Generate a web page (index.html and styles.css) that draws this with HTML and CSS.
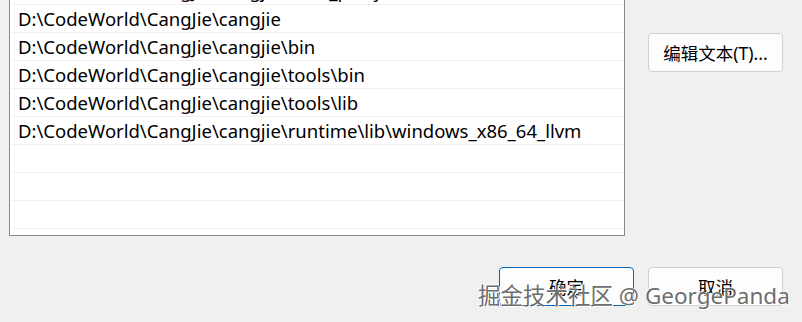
FILE: index.html
```html
<!DOCTYPE html>
<html lang="zh-CN">
<head>
  <meta charset="UTF-8" />
  <title>编辑环境变量</title>
  <link rel="stylesheet" href="styles.css">
</head>
<body>

  <div class="dialogo">
    <div class="arriba">
      <div class="lista">
        <div class="fila">D:\CodeWorld\CangJie\cangjie\third_party\llvm\lldb\bin</div>
        <div class="fila">D:\CodeWorld\CangJie\cangjie</div>
        <div class="fila">D:\CodeWorld\CangJie\cangjie\bin</div>
        <div class="fila">D:\CodeWorld\CangJie\cangjie\tools\bin</div>
        <div class="fila">D:\CodeWorld\CangJie\cangjie\tools\lib</div>
        <div class="fila">D:\CodeWorld\CangJie\cangjie\runtime\lib\windows_x86_64_llvm</div>
        <div class="fila"></div>
        <div class="fila"></div>
        <div class="fila"></div>
        <div class="fila"></div>
      </div>
      <div class="lateral">
        <button class="btn">编辑文本(T)...</button>
      </div>
    </div>

    <div class="acciones">
      <button class="btn btn-foco">确定</button>
      <button class="btn">取消</button>
    </div>
  </div>

  <div class="marca">掘金技术社区 @ GeorgePanda</div>

</body>
</html>
```

FILE: styles.css
```css
body {
  background: #f0f0f0;
  font-family: "Noto Sans", "Noto Sans CJK SC", sans-serif;
  margin: 0;
  color: #000;
  overflow: hidden;
}
.dialogo {
  padding: 0 19px 0 9px;
}
.arriba {
  display: flex;
  align-items: flex-start;
}
.lista {
  width: 616px;
  height: 260px;
  margin-top: -24px;
  box-sizing: border-box;
  border: 1px solid #8a8a8a;
  background: #fff;
  overflow: hidden;
}
.fila {
  height: 27px;
  line-height: 27px;
  margin-left: 2px;
  padding-left: 6px;
  border-bottom: 1px solid #eeeeee;
  font-size: 18.5px;
  white-space: nowrap;
}
.lateral {
  margin-left: 23px;
  margin-top: 33px;
}
.btn {
  width: 135px;
  height: 39px;
  padding: 0;
  border: 1px solid #d0d0d0;
  border-radius: 4px;
  background: #fdfdfd;
  font-family: "Noto Sans", "Noto Sans CJK SC", sans-serif;
  font-size: 17.5px;
  color: #000;
}
.btn-foco {
  border-color: #0067c0;
}
.acciones {
  display: flex;
  justify-content: flex-end;
  gap: 14px;
  margin-top: 31px;
}
.marca {
  position: absolute;
  left: 478px;
  top: 278px;
  font-family: "Noto Sans", "Noto Sans CJK SC", sans-serif;
  font-size: 22.5px;
  color: rgba(90, 90, 90, 0.9);
  text-shadow: 1px 1px 0 #fff, -1px -1px 0 rgba(255, 255, 255, 0.8);
  white-space: nowrap;
}
```
